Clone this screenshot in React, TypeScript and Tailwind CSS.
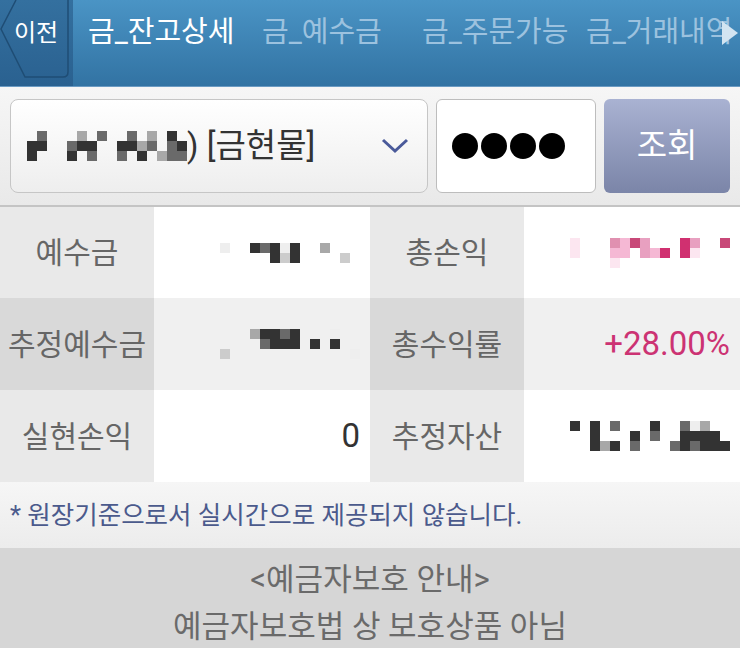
import React from "react";

const C: Record<string, string> = {
  d: "#333333",
  g: "#6a6a6a",
  b: "#a8a8a8",
  l: "#cccccc",
  w: "#eeeeee",
  p: "#fce6f0",
  q: "#f5b8d4",
  r: "#e090b0",
  s: "#c84878",
  t: "#d03070",
  u: "#e8a0c0",
};

const Mosaic = ({ rows }: { rows: string[] }) => (
  <div className="flex flex-col">
    {rows.map((row, i) => (
      <div key={i} className="flex">
        {row.split("").map((ch, j) => (
          <div key={j} className="w-[10px] h-[10px]" style={{ background: C[ch] ?? "transparent" }} />
        ))}
      </div>
    ))}
  </div>
);

const font = "font-['Roboto','Noto_Sans_CJK_KR',sans-serif]";

const Label = ({ text, dark }: { text: string; dark?: boolean }) => (
  <div className={`w-[154px] flex items-center justify-center text-[30px] text-[#666666] ${dark ? "bg-[#d9d9d9]" : "bg-[#e9e9e9]"}`}>
    {text}
  </div>
);

const Value = ({ children, dark, w }: { children: React.ReactNode; dark?: boolean; w: string }) => (
  <div className={`${w} flex items-center justify-end pr-[10px] ${dark ? "bg-[#f0f0f0]" : "bg-white"}`}>{children}</div>
);

export default function App() {
  return (
    <div className={`w-[740px] h-[648px] overflow-hidden flex flex-col ${font}`}>
      {/* header */}
      <div className="h-[87px] shrink-0 flex bg-gradient-to-b from-[#4a94c5] to-[#3273a3] border-b border-[#6b9bc3]">
        <div className="w-[73px] relative bg-gradient-to-b from-[#34709f] to-[#2a6190] flex items-start">
          <svg className="absolute left-0 top-0" width="73" height="86" viewBox="0 0 73 86">
            <path d="M16 0 L1 29 L25 77 L63 77 Q68 77 68 72 L68 0" fill="none" stroke="#1f4d75" strokeWidth="1.5" />
          </svg>
          <span className="relative mt-[15px] ml-[14px] text-[24px] text-white">이전</span>
        </div>
        <div className="flex-1 relative overflow-hidden">
          <div className="flex pl-[15px] pt-[11px] text-[29px] whitespace-nowrap">
            <span className="w-[174px] shrink-0 text-white">금_잔고상세</span>
            <span className="w-[160px] shrink-0 text-[#9cc2df]">금_예수금</span>
            <span className="w-[164px] shrink-0 text-[#9cc2df]">금_주문가능</span>
            <span className="shrink-0 text-[#9cc2df]">금_거래내역</span>
          </div>
          <svg className="absolute right-[2px] top-[21px]" width="16" height="24" viewBox="0 0 16 24">
            <path d="M0 0 L16 12 L0 24 Z" fill="#d2e4f1" />
          </svg>
        </div>
      </div>

      {/* query row */}
      <div className="h-[120px] shrink-0 flex gap-[8px] px-[10px] pt-[12px] pb-[12px] bg-gradient-to-b from-[#f6f6f6] to-[#e9e9e9] border-b-2 border-[#c4c4c4]">
        <div className="flex-1 flex items-center pl-[16px] pr-[18px] rounded-[8px] border border-[#c6c6c6] bg-gradient-to-b from-white to-[#eeeeee]">
          <Mosaic
            rows={[
              ".g...b.g..g.b.d.",
              "dd..gdd..ddbg.gd",
              "d...d.g..g.d.bgg",
            ]}
          />
          <span className="text-[33px] text-[#333333] whitespace-pre">{") [금현물]"}</span>
          <svg className="ml-auto" width="28" height="16" viewBox="0 0 28 16">
            <path d="M2 2 L14 13 L26 2" fill="none" stroke="#4a5a9a" strokeWidth="3" />
          </svg>
        </div>
        <div className="w-[160px] flex items-center gap-[3px] pl-[15px] rounded-[6px] border border-[#bdbdbd] bg-white">
          <div className="w-[26px] h-[26px] rounded-full bg-black" />
          <div className="w-[26px] h-[26px] rounded-full bg-black" />
          <div className="w-[26px] h-[26px] rounded-full bg-black" />
          <div className="w-[26px] h-[26px] rounded-full bg-black" />
        </div>
        <div className="w-[126px] flex items-center justify-center rounded-[6px] bg-gradient-to-b from-[#a9b2d2] to-[#7b85a8] text-[33px] text-white">
          조회
        </div>
      </div>

      {/* table */}
      <div className="flex h-[91px] shrink-0">
        <Label text="예수금" />
        <Value w="w-[216px]">
          <Mosaic rows={["w..dgdwd..b...", ".....dld....l."]} />
        </Value>
        <Label text="총손익" />
        <Value w="flex-1">
          <Mosaic rows={["p...rqsu...tu..s", "p...qq.uqt.tp...", "....p..........."]} />
        </Value>
      </div>
      <div className="flex h-[92px] shrink-0">
        <Label text="추정예수금" dark />
        <Value w="w-[216px]" dark>
          <Mosaic rows={["...bddgd...w..", "....gddd.d.d..", "l............w"]} />
        </Value>
        <Label text="총수익률" dark />
        <Value w="flex-1" dark>
          <span className="text-[33px] text-[#cc3373]">+28.00%</span>
        </Value>
      </div>
      <div className="flex h-[92px] shrink-0">
        <Label text="실현손익" />
        <Value w="w-[216px]">
          <span className="text-[33px] text-[#333333]">0</span>
        </Value>
        <Label text="추정자산" />
        <Value w="flex-1">
          <Mosaic rows={["d.d.g...d..gwb..", "..d...d.g..dddd.", "..dbd.g...gdgddd"]} />
        </Value>
      </div>

      {/* note */}
      <div className="h-[66px] shrink-0 flex items-center pl-[10px] bg-gradient-to-b from-[#f6f6f6] to-[#ececec] text-[25.5px] text-[#4b5a8c]">
        * 원장기준으로서 실시간으로 제공되지 않습니다.
      </div>

      {/* footer */}
      <div className="flex-1 overflow-hidden bg-[#d6d6d6] flex flex-col items-center pt-[8px] text-[31px] leading-[47px] text-[#6a6a6a]">
        <span>&lt;예금자보호 안내&gt;</span>
        <span>예금자보호법 상 보호상품 아님</span>
      </div>
    </div>
  );
}
